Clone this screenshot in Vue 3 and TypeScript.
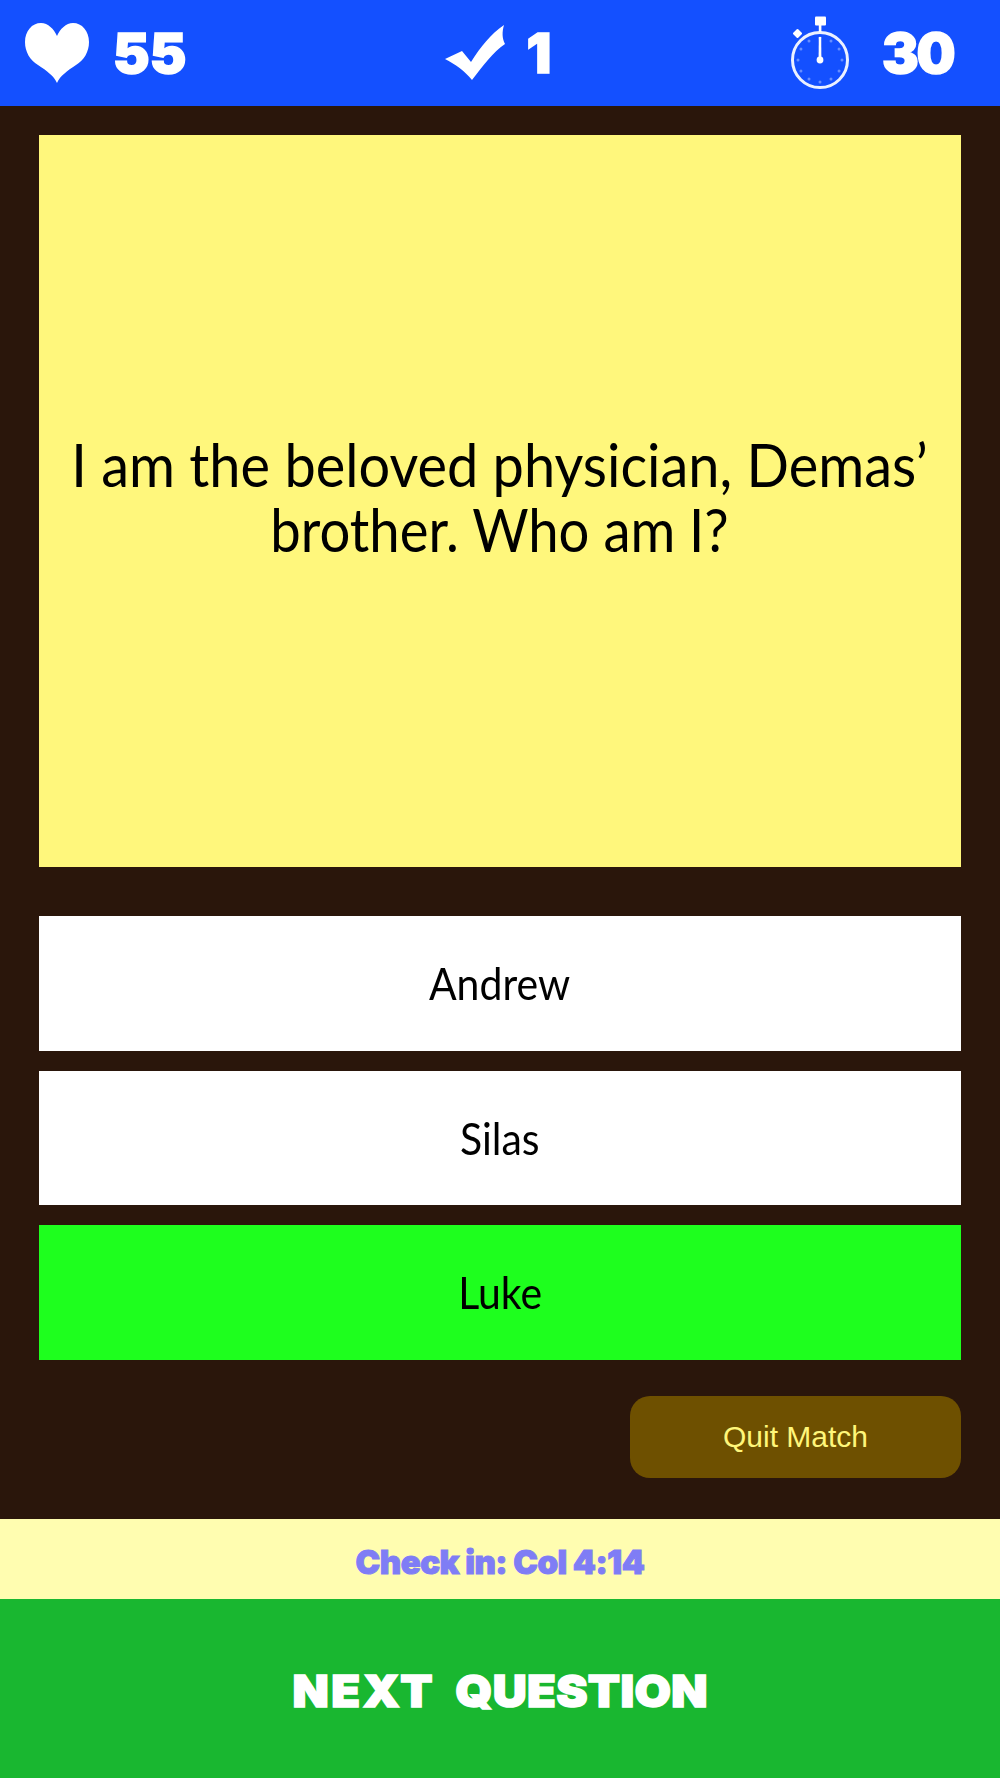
<template>
  <div class="screen">
    <header class="top-bar">
      <div class="stat stat-lives">
        <svg class="icon" viewBox="0 0 64 60" width="64" height="60">
          <path d="M32 60 C29 53 22 48 13 42 C5 37 0 29 0 19 C0 8 7 0 16 0 C23 0 29 6 32 13 C35 6 41 0 48 0 C57 0 64 8 64 19 C64 29 59 37 51 42 C42 48 35 53 32 60 Z" fill="#fff" />
        </svg>
        <span class="num">{{ lives }}</span>
      </div>
      <div class="stat stat-score">
        <svg class="icon" viewBox="0 0 62 58" width="62" height="58">
          <path d="M0 35 L17 27 L26 38 C36 22 46 10 59 1 C57 8 57 14 60 20 C48 28 38 42 27 56 C20 47 10 40 0 35 Z" fill="#fff" />
        </svg>
        <span class="num">{{ score }}</span>
      </div>
      <div class="stat stat-time">
        <svg class="icon" viewBox="0 0 60 74" width="60" height="74">
          <g fill="#fff">
            <rect x="24" y="0.5" width="11" height="9" rx="1" />
            <rect x="27.8" y="8" width="2.6" height="8" />
            <rect x="3" y="14" width="7" height="7" rx="1" transform="rotate(-45 6.5 17.5)" />
            <circle cx="29" cy="44" r="3.4" />
            <path d="M27.8 21 H30.2 L30.4 44 H27.6 Z" />
          </g>
          <circle cx="29" cy="44" r="27.5" fill="none" stroke="#fff" stroke-width="3" opacity="0.92" />
          <g fill="#fff" opacity="0.35">
            <circle v-for="t in ticks" :key="t.a" :cx="t.x" :cy="t.y" r="1.5" />
          </g>
        </svg>
        <span class="num num-time">{{ time }}</span>
      </div>
    </header>

    <main class="body">
      <section class="question">
        <p class="q-text"><span class="line-a">I am the beloved physician, Demas’</span><span class="line-b">brother. Who am I?</span></p>
      </section>

      <div class="answers">
        <div
          v-for="a in answers"
          :key="a.label"
          class="answer"
          :class="{ correct: a.correct }"
        >
          <span>{{ a.label }}</span>
        </div>
      </div>

      <div class="quit-row">
        <button class="quit">Quit Match</button>
      </div>
    </main>

    <div class="hint"><span>Check in: Col 4:14</span></div>
    <div class="next">
      <div class="next-label"><span class="word-a">NEXT</span> <span class="word-b">QUESTION</span></div>
    </div>
  </div>
</template>

<script setup lang="ts">
const lives = 55
const score = 1
const time = 30

const answers = [
  { label: 'Andrew', correct: false },
  { label: 'Silas', correct: false },
  { label: 'Luke', correct: true },
]

// small dots round the watch face
const ticks = Array.from({ length: 12 }, (_, i) => {
  const a = (i * Math.PI) / 6
  return { a: i, x: 29 + 22 * Math.sin(a), y: 44 - 22 * Math.cos(a) }
})
</script>

<style scoped>
.screen {
  width: 1000px;
  height: 1778px;
  display: flex;
  flex-direction: column;
  background: #2a160b;
  overflow: hidden;
}

.top-bar {
  height: 106px;
  background: #1450ff;
  display: grid;
  grid-template-columns: 1fr 1fr 1fr;
  align-items: center;
  color: #fff;
}

.stat {
  display: flex;
  align-items: center;
}

.icon {
  filter: blur(0.5px);
}

.stat-lives {
  padding-left: 25px;
  gap: 24px;
}

.stat-score {
  justify-content: center;
  gap: 20px;
  padding-right: 4px;
}

.stat-time {
  justify-content: flex-end;
  gap: 31px;
  padding-right: 47px;
}

.num {
  font-family: Inter, "Liberation Sans", sans-serif;
  font-weight: 900;
  font-size: 55px;
  line-height: 1;
  -webkit-text-stroke: 1.5px #fff;
}

.num-time {
  letter-spacing: -2.5px;
}

.body {
  flex: 1;
  display: flex;
  flex-direction: column;
  padding: 29px 39px 0;
}

.question {
  height: 732px;
  background: #fff77c;
  display: flex;
  align-items: center;
  justify-content: center;
  text-align: center;
}

.q-text {
  margin: 0;
  font-family: Lato, "Open Sans", sans-serif;
  font-size: 60px;
  line-height: 65px;
  color: #000;
  white-space: nowrap;
  transform: translateY(-4px);
}

.q-text span {
  display: block;
}

.line-a {
  transform: scaleX(0.932);
}

.line-b {
  transform: scaleX(0.907);
}

.answers {
  margin-top: 49px;
  display: flex;
  flex-direction: column;
  gap: 20px;
}

.answer {
  height: 134.5px;
  background: #fff;
  display: flex;
  align-items: center;
  justify-content: center;
  font-family: Lato, "Open Sans", sans-serif;
  font-size: 45px;
  color: #000;
}

.answer span {
  display: inline-block;
  transform: scaleX(0.91);
}

.answer.correct {
  background: #1eff1e;
}

.quit-row {
  margin-top: 36.5px;
  display: flex;
  justify-content: flex-end;
}

.quit {
  width: 331px;
  height: 82px;
  border: none;
  border-radius: 20px;
  background: #6e5000;
  color: #fff67a;
  font-family: "Liberation Sans", Arial, sans-serif;
  font-size: 30px;
}

.hint {
  height: 80px;
  background: #fffdb0;
  display: flex;
  align-items: center;
  justify-content: center;
  font-family: Inter, "Liberation Sans", sans-serif;
  font-weight: 900;
  font-size: 33px;
  letter-spacing: -0.5px;
  color: #7f7df5;
  -webkit-text-stroke: 1px #7f7df5;
}

.hint span {
  display: block;
  transform: translateY(3px);
}

.next {
  height: 179px;
  background: #19b730;
  display: flex;
  align-items: center;
  justify-content: center;
  font-family: Inter, "Liberation Sans", sans-serif;
  font-weight: 900;
  font-size: 44px;
  color: #fff;
  -webkit-text-stroke: 1.5px #fff;
}

.next-label {
  white-space: nowrap;
  word-spacing: 10px;
  transform: translateY(2px) scaleX(1.07);
}

.word-a {
  letter-spacing: 2.4px;
}

.word-b {
  letter-spacing: 0.3px;
}
</style>
